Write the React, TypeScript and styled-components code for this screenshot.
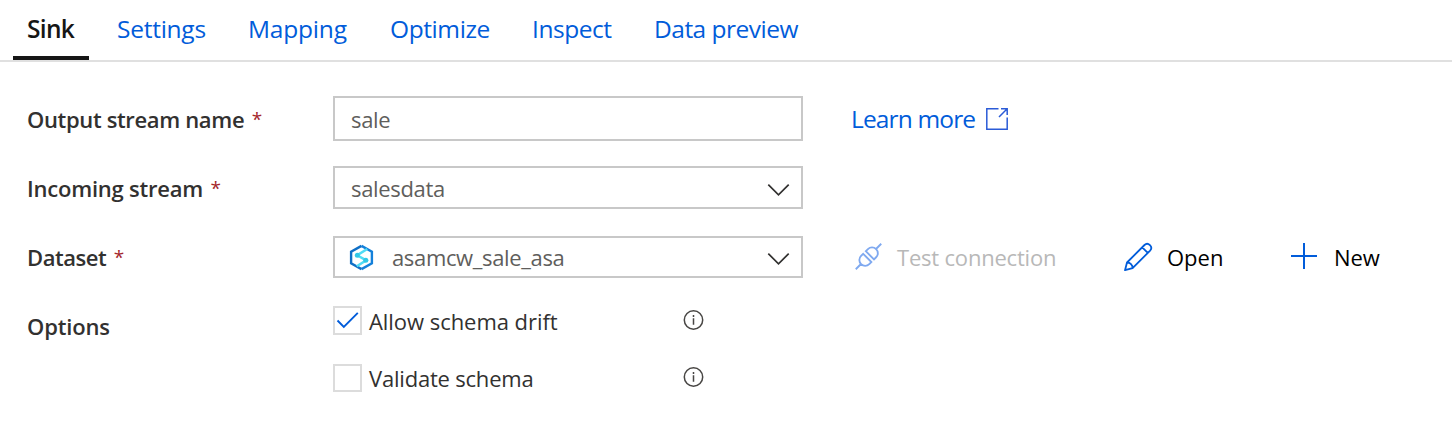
import React from 'react';
import styled, { createGlobalStyle } from 'styled-components';

const GlobalStyle = createGlobalStyle`
  *, *::before, *::after { box-sizing: border-box; }
  body {
    margin: 0;
    background: #fff;
    color: #323130;
    font-family: 'Open Sans', 'Noto Sans', sans-serif;
    font-size: 22px;
    line-height: 30px;
  }
  svg { display: block; flex: none; overflow: visible; }
`;

const Panel = styled.main`
  width: 1452px;
  height: 441px;
  overflow: hidden;
`;

const TabList = styled.nav`
  display: flex;
  gap: 14px;
  height: 62px;
  padding-left: 13px;
  border-bottom: 2px solid #e0e0e0;
`;

const Tab = styled.a<{ $width: number; $active?: boolean; $spacing: number }>`
  width: ${(p) => p.$width}px;
  height: 60px;
  padding: 13px 0 0 14px;
  border-bottom: 4px solid ${(p) => (p.$active ? '#161616' : 'transparent')};
  color: ${(p) => (p.$active ? '#161616' : '#015cda')};
  font-size: 24.5px;
  font-weight: ${(p) => (p.$active ? 600 : 400)};
  line-height: 32px;
  letter-spacing: ${(p) => p.$spacing}px;
  white-space: nowrap;
`;

const Form = styled.form`
  display: flex;
  flex-direction: column;
  padding: 34px 0 0 27px;
`;

const Row = styled.div<{ $height: number }>`
  display: flex;
  align-items: flex-start;
  height: ${(p) => p.$height}px;
`;

const Label = styled.label<{ $top: number }>`
  display: flex;
  width: 306px;
  padding-top: ${(p) => p.$top}px;
  font-weight: 600;
  white-space: nowrap;
`;

const Text = styled.span<{ $spacing?: number }>`
  letter-spacing: ${(p) => p.$spacing ?? 0}px;
  white-space: nowrap;
`;

const Required = styled.span`
  margin-left: 7.5px;
  color: #a4262c;
  font-size: 19px;
  font-weight: 400;
`;

const Field = styled.div<{ $height: number }>`
  display: flex;
  align-items: center;
  width: 470px;
  height: ${(p) => p.$height}px;
  padding: 0 12px 0 16px;
  border: 2px solid #c8c8c8;
  color: #605e5c;
`;

const FieldIcon = styled.span`
  width: 44px;
  margin-left: -3px;
`;

const Chevron = styled.span`
  margin-left: auto;
  padding-top: 4px;
`;

const Actions = styled.div<{ $top: number }>`
  display: flex;
  padding: ${(p) => p.$top}px 0 0 48px;
`;

const Link = styled.a`
  display: flex;
  gap: 10px;
  width: 160px;
  color: #015cda;
  font-size: 24.5px;
`;

const LinkIcon = styled.span`
  padding-top: 3px;
`;

const Action = styled.button<{ $width: number; $disabled?: boolean }>`
  display: flex;
  width: ${(p) => p.$width}px;
  padding: 0;
  border: 0;
  background: none;
  color: ${(p) => (p.$disabled ? '#b8b8b8' : '#000')};
  font: inherit;
`;

const ActionIcon = styled.span<{ $left: number }>`
  width: 46px;
  padding: 1px 0 0 ${(p) => p.$left}px;
  flex: none;
`;

const Options = styled.div`
  display: flex;
  flex-direction: column;
  gap: 29px;
`;

const Option = styled.div`
  display: flex;
  align-items: flex-start;
  height: 29px;
`;

const CheckBox = styled.span<{ $height: number }>`
  display: flex;
  width: 29px;
  height: ${(p) => p.$height}px;
  border: 2px solid #dcdcdc;
`;

const OptionText = styled.span<{ $top: number; $spacing: number }>`
  width: 315px;
  margin-top: ${(p) => p.$top}px;
  padding-left: 7px;
  letter-spacing: ${(p) => p.$spacing}px;
  white-space: nowrap;
`;

const InfoIcon = styled.span<{ $top: number }>`
  margin: ${(p) => p.$top}px 0 0 6px;
`;

const ChevronDown = () => (
  <Chevron>
    <svg width="21" height="12" viewBox="0 0 21 12" fill="none" stroke="#323130" strokeWidth="1.7">
      <path d="M.3.6 10.500 10.800 20.700.6" />
    </svg>
  </Chevron>
);

const SynapseIcon = () => (
  <svg width="26" height="27" viewBox="0 0 26 27" fill="none">
    <path d="M13.500 1.900 3.100 7.600v11.800l10.400 5.700" stroke="#0f6fc6" strokeWidth="2.400" />
    <path d="M13.500 1.900 23.900 7.600v11.800l-10.400 5.700" stroke="#1480da" strokeWidth="2.400" />
    <path d="m19.200 5-10 6.300 9 5-9.400 6" stroke="#50dcf5" strokeWidth="2.500" />
    <circle cx="9.300" cy="11.300" r="2.500" fill="#32c8e6" />
    <circle cx="17.800" cy="16.300" r="2.500" fill="#32c8e6" />
  </svg>
);

const ExternalIcon = () => (
  <svg width="24" height="24" viewBox="0 0 24 24" fill="none" stroke="#2b5bd7" strokeWidth="1.500">
    <path d="M13.500 1.800H1.800v20.400h20.400V10.500M16 1.800h6.200V8M22.200 1.800 14 10" />
  </svg>
);

const PlugIcon = () => (
  <svg width="27" height="27" viewBox="0 0 28 28" fill="none" stroke="#7fa9f0" strokeWidth="1.900">
    <path d="m.8 27.200 5.400-5.400M21.800 6.200 27.200.8M8.500 11.200 17 19.700l-2.200 2.200c-2.400 2.400-6.100 2.400-8.500 0s-2.400-6.100 0-8.500zM11.200 8.500l8.500 8.500 2.200-2.200c2.400-2.400 2.400-6.100 0-8.500s-6.100-2.400-8.500 0z" />
  </svg>
);

const PencilIcon = () => (
  <svg width="28" height="28" viewBox="0 0 28 28" fill="none" stroke="#015cda" strokeWidth="1.800" strokeLinejoin="round">
    <path d="M1 27.200 3 19.500 20.500 2c3.600-3.400 9 2 5.600 5.600L8.600 25.200zM18.200 4.300l5.600 5.600M3 19.500c3-.2 5.800 2.600 5.600 5.700" />
  </svg>
);

const PlusIcon = () => (
  <svg width="26" height="26" viewBox="0 0 26 26" stroke="#015cda" strokeWidth="2">
    <path d="M13 0v26M0 13h26" />
  </svg>
);

const CheckIcon = () => (
  <svg width="25" height="25" viewBox="0 0 25 25" fill="none" stroke="#015cda" strokeWidth="1.900">
    <path d="m2.500 12.500 6.300 6.300L22.800 4.800" />
  </svg>
);

const Info = () => (
  <svg width="21" height="20" viewBox="0 0 21 20" fill="none" stroke="#484644" strokeWidth="1.500">
    <circle cx="10.500" cy="10" r="9.200" />
    <path d="M10.500 8.200v6.500M10.500 5v1.900" />
  </svg>
);

export default function App() {
  return (
    <Panel>
      <GlobalStyle />
      <TabList>
        <Tab $width={76} $spacing={-0.7} $active>Sink</Tab>
        <Tab $width={117} $spacing={-0.25}>Settings</Tab>
        <Tab $width={128} $spacing={-0.2}>Mapping</Tab>
        <Tab $width={128} $spacing={-0.4}>Optimize</Tab>
        <Tab $width={108} $spacing={-0.45}>Inspect</Tab>
        <Tab $width={172} $spacing={-0.5}>Data preview</Tab>
      </TabList>
      <Form>
        <Row $height={70}>
          <Label $top={8}><Text $spacing={-0.35}>Output stream name</Text><Required>*</Required></Label>
          <Field $height={45}><Text $spacing={-0.3}>sale</Text></Field>
          <Actions $top={8}>
            <Link><Text $spacing={-0.85}>Learn more</Text><LinkIcon><ExternalIcon /></LinkIcon></Link>
          </Actions>
        </Row>
        <Row $height={70}>
          <Label $top={7}><Text $spacing={-0.22}>Incoming stream</Text><Required>*</Required></Label>
          <Field $height={43}><Text $spacing={-0.33}>salesdata</Text><ChevronDown /></Field>
        </Row>
        <Row $height={70}>
          <Label $top={6}><Text $spacing={-0.45}>Dataset</Text><Required>*</Required></Label>
          <Field $height={42}>
            <FieldIcon><SynapseIcon /></FieldIcon>
            <Text $spacing={-0.35}>asamcw_sale_asa</Text>
            <ChevronDown />
          </Field>
          <Actions $top={6}>
            <Action type="button" $width={270} $disabled>
              <ActionIcon $left={4}><PlugIcon /></ActionIcon><Text $spacing={-0.2}>Test connection</Text>
            </Action>
            <Action type="button" $width={167}>
              <ActionIcon $left={3}><PencilIcon /></ActionIcon><Text>Open</Text>
            </Action>
            <Action type="button" $width={110}>
              <ActionIcon $left={3}><PlusIcon /></ActionIcon><Text $spacing={-0.1}>New</Text>
            </Action>
          </Actions>
        </Row>
        <Row $height={100}>
          <Label $top={5}><Text $spacing={-0.15}>Options</Text></Label>
          <Options>
            <Option>
              <CheckBox $height={29}><CheckIcon /></CheckBox>
              <OptionText $top={0} $spacing={-0.05}>Allow schema drift</OptionText>
              <InfoIcon $top={4}><Info /></InfoIcon>
            </Option>
            <Option>
              <CheckBox $height={28} />
              <OptionText $top={-1} $spacing={-0.2}>Validate schema</OptionText>
              <InfoIcon $top={3}><Info /></InfoIcon>
            </Option>
          </Options>
        </Row>
      </Form>
    </Panel>
  );
}
